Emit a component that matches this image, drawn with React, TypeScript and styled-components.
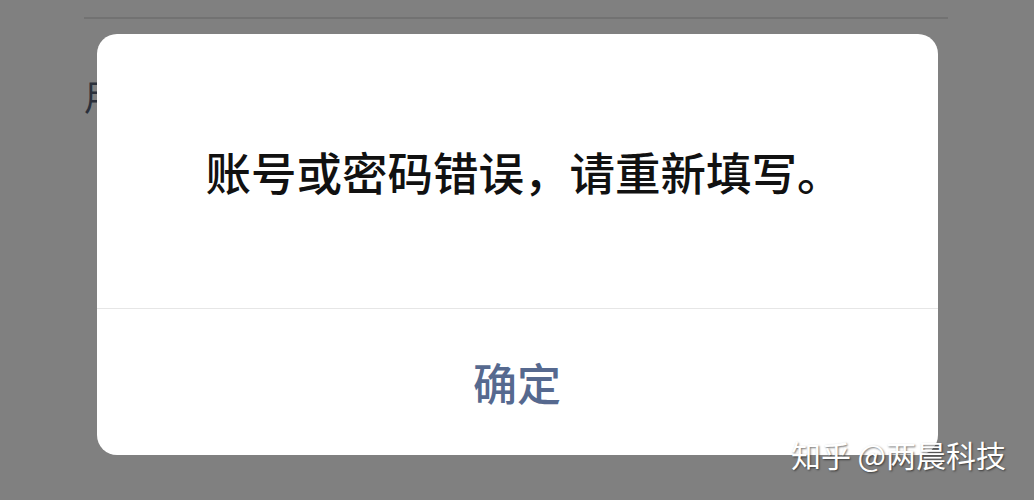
import React from "react";
import styled, { createGlobalStyle } from "styled-components";

const GlobalStyle = createGlobalStyle`
  html, body {
    margin: 0;
    padding: 0;
    background: #808080;
  }
  body {
    font-family: "Noto Sans CJK SC", "Noto Sans", sans-serif;
  }
`;

const Screen = styled.div`
  position: relative;
  width: 1034px;
  height: 500px;
  overflow: hidden;
  background: #808080;
`;

/* dimmed page underneath the modal */
const Page = styled.div`
  display: flex;
  flex-direction: column;
  padding: 17px 86px 0 84px;
`;

const Rule = styled.div`
  height: 2px;
  background: #727272;
`;

const FieldLabel = styled.div`
  margin-top: 56px;
  font-size: 36px;
  line-height: 40px;
  color: #2b303b;
`;

const Overlay = styled.div`
  position: absolute;
  inset: 0;
  display: flex;
  justify-content: center;
  padding-top: 34px;
`;

const Dialog = styled.div`
  width: 841px;
  height: 421px;
  background: #ffffff;
  border-radius: 20px;
  display: flex;
  flex-direction: column;
  overflow: hidden;
`;

const Message = styled.div`
  height: 274px;
  display: flex;
  align-items: center;
  justify-content: center;
  padding-left: 14px;
  font-size: 45.5px;
  font-weight: 500;
  color: #111111;
`;

const Divider = styled.div`
  height: 1px;
  background: #e6e6e6;
`;

const ConfirmButton = styled.button`
  flex: 1;
  border: 0;
  background: transparent;
  display: flex;
  align-items: center;
  justify-content: center;
  font-family: "Noto Sans CJK SC", "Noto Sans", sans-serif;
  font-size: 44px;
  font-weight: 500;
  color: #56698f;
  padding: 0;
  cursor: pointer;
`;

const Watermark = styled.div`
  position: absolute;
  right: 28px;
  bottom: 28px;
  font-size: 30px;
  line-height: 36px;
  color: #ffffff;
  text-shadow: 1px 1px 2px rgba(0, 0, 0, 0.55);
  white-space: pre;
`;

export default function App() {
  return (
    <Screen>
      <GlobalStyle />
      <Page>
        <Rule />
        <FieldLabel>用户名</FieldLabel>
      </Page>
      <Overlay>
        <Dialog>
          <Message>账号或密码错误，请重新填写。</Message>
          <Divider />
          <ConfirmButton>确定</ConfirmButton>
        </Dialog>
      </Overlay>
      <Watermark>知乎 @两晨科技</Watermark>
    </Screen>
  );
}
